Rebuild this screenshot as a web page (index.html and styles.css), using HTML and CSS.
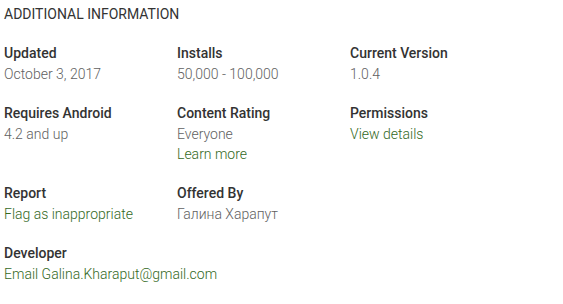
FILE: index.html
```html
<!DOCTYPE html>
<html>
<head>
    <meta charset="UTF-8">
    <title>Additional Information</title>
    <link rel="stylesheet" href="styles.css">
</head>
<body>
<section class="details">
    <h2 class="details-title">ADDITIONAL INFORMATION</h2>
    <div class="details-grid">
        <div class="item">
            <div class="label">Updated</div>
            <div class="value">October 3, 2017</div>
        </div>
        <div class="item">
            <div class="label">Installs</div>
            <div class="value">50,000 - 100,000</div>
        </div>
        <div class="item">
            <div class="label">Current Version</div>
            <div class="value">1.0.4</div>
        </div>

        <div class="item">
            <div class="label">Requires Android</div>
            <div class="value">4.2 and up</div>
        </div>
        <div class="item">
            <div class="label">Content Rating</div>
            <div class="value">Everyone</div>
            <a class="value link" href="#">Learn more</a>
        </div>
        <div class="item">
            <div class="label">Permissions</div>
            <a class="value link" href="#">View details</a>
        </div>

        <div class="item">
            <div class="label">Report</div>
            <a class="value link" href="#">Flag as inappropriate</a>
        </div>
        <div class="item">
            <div class="label">Offered By</div>
            <div class="value">Галина Харапут</div>
        </div>
        <div class="item"></div>

        <div class="item item-wide">
            <div class="label">Developer</div>
            <a class="value link" href="#">Email Galina.Kharaput@gmail.com</a>
        </div>
    </div>
</section>
</body>
</html>
```

FILE: styles.css
```css
body{
    margin: 0;
    background: #fff;
    font: 14px/20px Roboto, "Noto Sans", sans-serif;
    color: #333;
}

.details{
    padding: 4px 4px;
}

.details-title{
    margin: 0 0 19px;
    font-size: 14px;
    font-weight: 400;
    line-height: 20px;
    color: #333;
}

.details-grid{
    display: grid;
    grid-template-columns: 173px 173px 173px;
    row-gap: 19px;
}

.item{
    display: flex;
    flex-direction: column;
}
.item-wide{
    grid-column: span 3;
}

.label{
    font-weight: 500;
    color: #333;
    line-height: 20px;
}
.value{
    font-weight: 300;
    color: #616161;
    line-height: 20px;
    margin-top: 1px;
    white-space: nowrap;
}
.value + .value{
    margin-top: 0;
}

a.link{
    color: #33691e;
    text-decoration: none;
    align-self: flex-start;
}
```
